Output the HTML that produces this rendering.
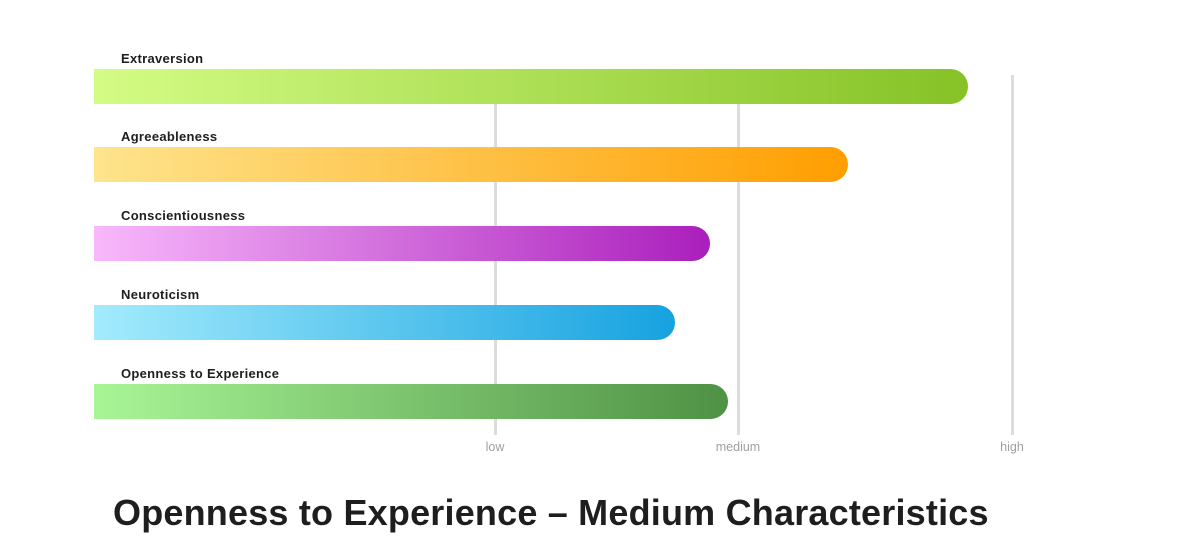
<!DOCTYPE html>
<html><head><style>
body{margin:0;width:1177px;height:550px;background:#fff;position:relative;font-family:"Liberation Sans",sans-serif;overflow:hidden}
.g{position:absolute;top:75px;height:360px;width:3px;background:#dcdcdc}
.b{position:absolute;left:94px;height:35px;border-radius:0 18px 18px 0}
.l{position:absolute;left:121px;font-size:13px;font-weight:bold;color:#1e1e1e;letter-spacing:0.3px}
.t{position:absolute;top:440px;font-size:12.5px;color:#a0a0a0;transform:translateX(-50%)}
h1{position:absolute;left:113px;top:492px;margin:0;font-size:36px;font-weight:bold;color:#1e1e1e;letter-spacing:0.2px;white-space:nowrap}
</style></head><body>
<div class="g" style="left:494px"></div>
<div class="g" style="left:737px"></div>
<div class="g" style="left:1011px"></div>
<div class="l" style="top:51px">Extraversion</div>
<div class="b" style="top:69px;width:874px;background:linear-gradient(90deg,#d4fc85,#86c226)"></div>
<div class="l" style="top:129px">Agreeableness</div>
<div class="b" style="top:147px;width:754px;background:linear-gradient(90deg,#fee48d,#ff9e00)"></div>
<div class="l" style="top:208px">Conscientiousness</div>
<div class="b" style="top:226px;width:616px;background:linear-gradient(90deg,#f8b8fb,#aa1fbc)"></div>
<div class="l" style="top:287px">Neuroticism</div>
<div class="b" style="top:305px;width:581px;background:linear-gradient(90deg,#a3ebfd,#16a2e0)"></div>
<div class="l" style="top:366px">Openness to Experience</div>
<div class="b" style="top:384px;width:634px;background:linear-gradient(90deg,#a8f596,#4f9145)"></div>
<div class="t" style="left:495px">low</div>
<div class="t" style="left:738px">medium</div>
<div class="t" style="left:1012px">high</div>
<h1>Openness to Experience – Medium Characteristics</h1>
</body></html>
